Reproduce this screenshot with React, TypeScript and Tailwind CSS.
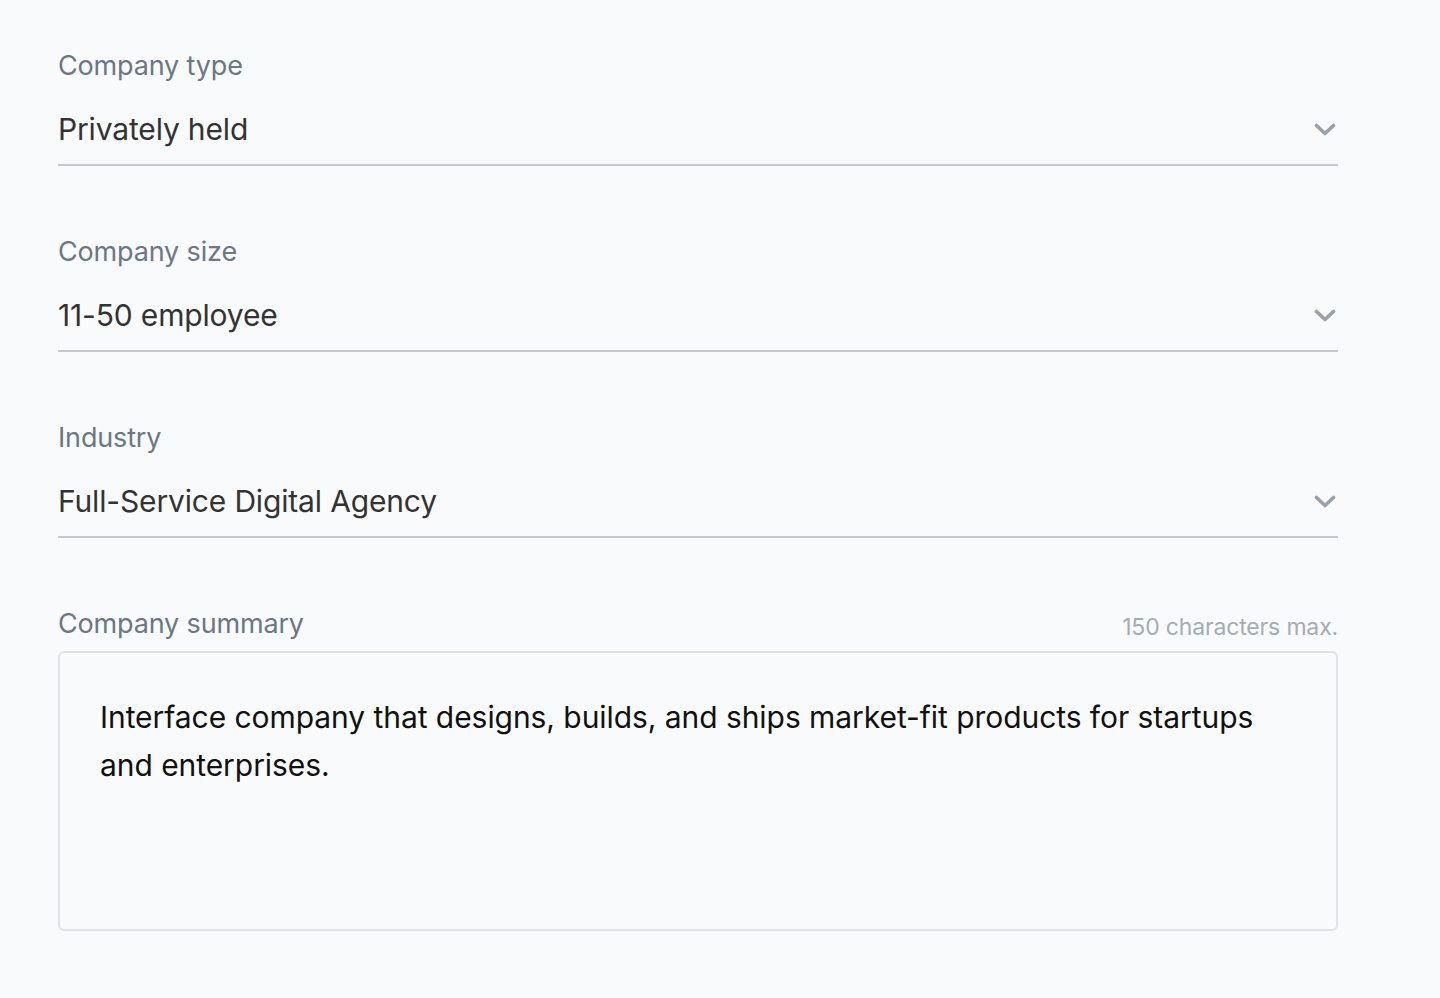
import React from "react";

const font = { fontFamily: "Inter, 'Helvetica Neue', Arial, sans-serif" };

function Chevron() {
  return (
    <svg width="22" height="13" viewBox="0 0 22 13" fill="none" className="shrink-0">
      <path d="M2.5 2.5l8.5 8L19.5 2.5" stroke="#9aa1a9" strokeWidth="3.6" strokeLinecap="round" strokeLinejoin="round" />
    </svg>
  );
}

function SelectField({ label, value }: { label: string; value: string }) {
  return (
    <div className="mb-[70px]">
      <div className="text-[27px] leading-[32px] text-[#6b7785]">{label}</div>
      <div className="mt-[27px] flex items-center justify-between border-b-2 border-[#c5c9ce] pb-[15px] pr-[2px]">
        <span className="text-[30px] leading-[40px] text-[#333333]">{value}</span>
        <Chevron />
      </div>
    </div>
  );
}

export default function App() {
  return (
    <div className="min-h-screen w-full bg-[#f9fafb] px-[58px] pt-[50px] tracking-[-0.01em]" style={font}>
      <div className="w-[1280px]">
        <SelectField label="Company type" value="Privately held" />
        <SelectField label="Company size" value="11-50 employee" />
        <SelectField label="Industry" value="Full-Service Digital Agency" />

        <div>
          <div className="flex h-[32px] items-baseline justify-between">
            <span className="text-[27px] leading-[32px] text-[#6b7785]">Company summary</span>
            <span className="translate-y-[2px] text-[23px] leading-[32px] text-[#a5acb4]">150 characters max.</span>
          </div>
          <div className="mt-[11px] h-[280px] rounded-[6px] border-2 border-[#e0e2e5] bg-[#f9fafb] px-[40px] pt-[40px]">
            <p className="text-[30px] leading-[48px] tracking-[-0.002em] text-[#111111]">
              Interface company that designs, builds, and ships market-fit products for startups and enterprises.
            </p>
          </div>
        </div>
      </div>
    </div>
  );
}
